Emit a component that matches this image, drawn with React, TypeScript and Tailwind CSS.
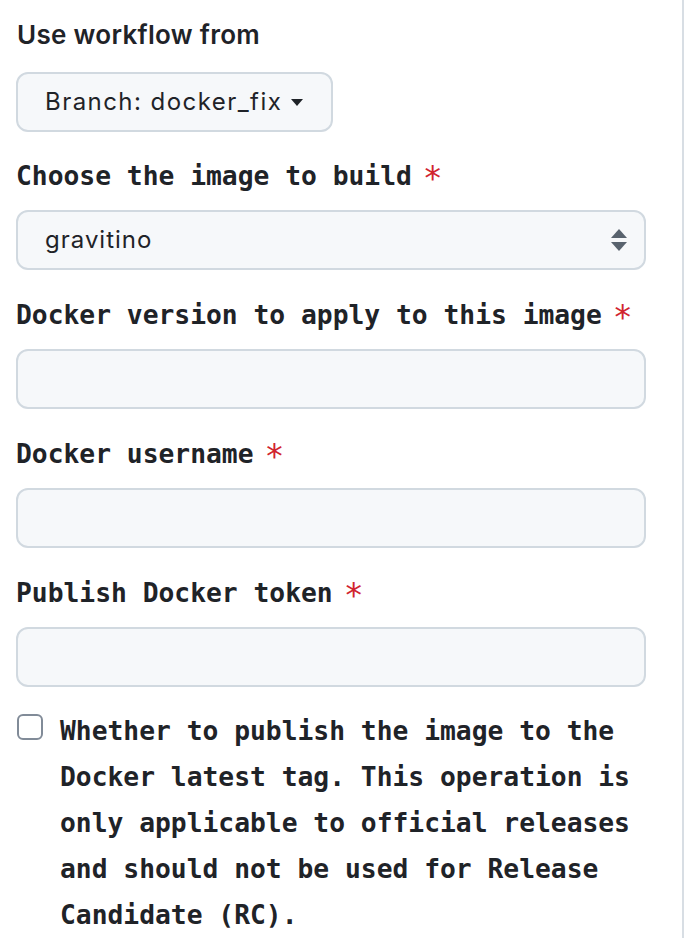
import React, { useState } from "react";

const mono = "font-['DejaVu_Sans_Mono',monospace]";

function Label({ text }: { text: string }) {
  return (
    <label
      className={`${mono} block h-[40px] font-bold text-[26.3px] leading-[40px] text-[#1f2328] mb-[14px] whitespace-nowrap`}
    >
      {text}
      <span className="ml-[11px] inline-block leading-none align-baseline text-[33px] text-[#d1242f] font-normal translate-y-[5px]">
        *
      </span>
    </label>
  );
}

function TextInput() {
  return (
    <input
      type="text"
      className="block w-[630px] h-[60px] rounded-[12px] border-2 border-[#d1d9e0] bg-[#f6f8fa] px-[28px] outline-none"
    />
  );
}

export default function App() {
  const [latest, setLatest] = useState(false);

  return (
    <div className="w-[684px] h-[938px] bg-white border-r-2 border-[#d8dee4] pl-[16px] pt-[16px] font-['Inter',sans-serif] text-[#1f2328] overflow-hidden">
      <div className="font-semibold text-[26px] leading-[38px] pl-[1px] tracking-[0.3px]">Use workflow from</div>

      <button className="mt-[18px] flex items-center h-[60px] w-[317px] rounded-[12px] border-2 border-[#d1d9e0] bg-[#f6f8fa] pl-[27px] text-[24px] tracking-[1.45px]">
        <span>Branch: docker_fix</span>
        <svg width="12" height="7" viewBox="0 0 12 7" className="ml-[9px]">
          <path d="M0 0h12L6 7z" fill="#1f2328" />
        </svg>
      </button>

      {/* image select */}
      <div className="mt-[24px]">
        <Label text="Choose the image to build" />
        <div className="flex items-center justify-between w-[630px] h-[60px] rounded-[12px] border-2 border-[#d1d9e0] bg-[#f6f8fa] pl-[27px] pr-[17px] text-[24px] tracking-[1px]">
          <span>gravitino</span>
          <svg width="16" height="22" viewBox="0 0 16 22">
            <path d="M8 0l8 9H0z" fill="#59636e" />
            <path d="M8 22l8-9H0z" fill="#59636e" />
          </svg>
        </div>
      </div>

      <div className="mt-[25px]">
        <Label text="Docker version to apply to this image" />
        <TextInput />
      </div>

      <div className="mt-[25px]">
        <Label text="Docker username" />
        <TextInput />
      </div>

      <div className="mt-[25px]">
        <Label text="Publish Docker token" />
        <TextInput />
      </div>

      <div className="mt-[21px] flex items-start">
        <button
          onClick={() => setLatest(!latest)}
          className="mt-[6px] ml-[1px] w-[26px] h-[26px] shrink-0 rounded-[6px] border-2 border-[#818b98] bg-white"
        />
        <p
          className={`${mono} ml-[17px] w-[590px] font-bold text-[26.3px] leading-[46px] text-[#1f2328]`}
        >
          Whether to publish the image to the Docker latest tag. This operation is only
          applicable to official releases and should not be used for Release Candidate (RC).
        </p>
      </div>
    </div>
  );
}
